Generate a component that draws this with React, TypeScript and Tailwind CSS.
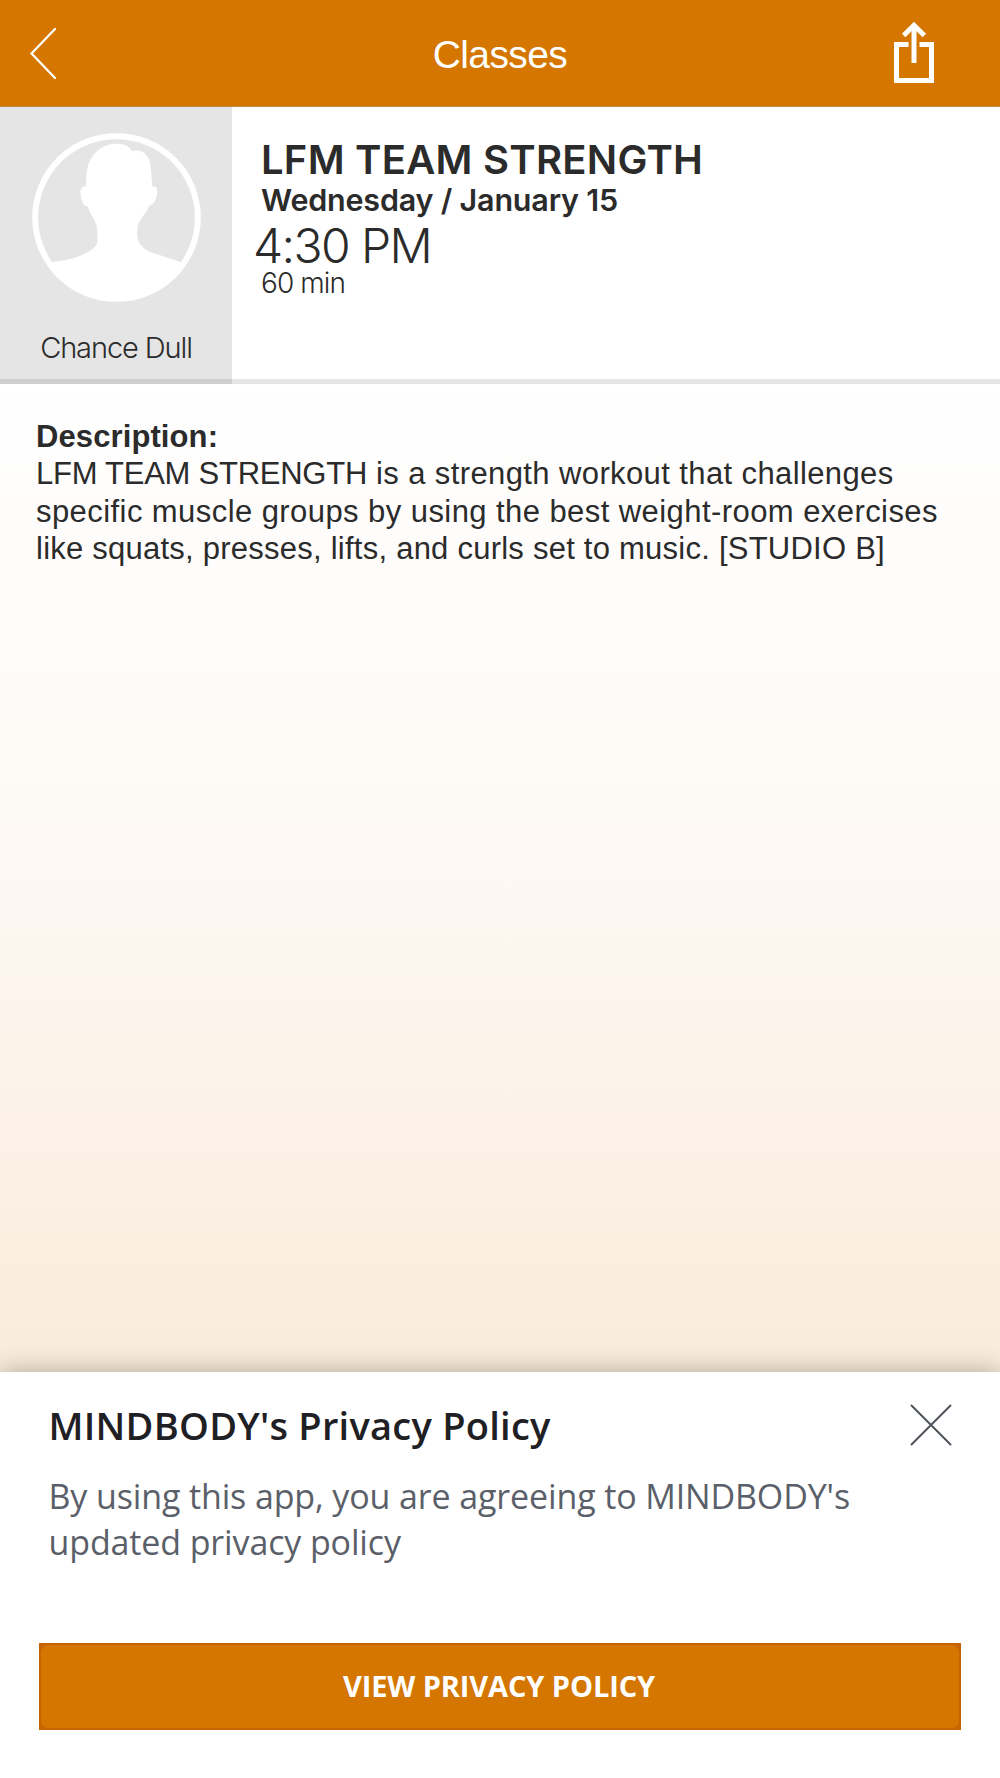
import type { ReactNode } from 'react';

const classInfo = {
  name: 'LFM TEAM STRENGTH',
  date: 'Wednesday / January 15',
  time: '4:30 PM',
  duration: '60 min',
  instructor: 'Chance Dull',
};

function BackIcon() {
  return (
    <svg width="30" height="56" viewBox="0 0 30 56" fill="none" stroke="#fff" strokeWidth="2.2" strokeLinecap="round">
      <path d="M27 4 3.5 28.5 27 53" />
    </svg>
  );
}

function ShareIcon() {
  return (
    <svg width="42" height="63" viewBox="0 0 42 63" fill="none" stroke="#fff" strokeWidth="5">
      <path d="M15.5 23.5H3.5V59.5H38.5V23.5H26.5" />
      <path d="M21 42V6" />
      <path d="M10.7 14.5 21 4.2 31.3 14.5" />
    </svg>
  );
}

function CloseIcon() {
  return (
    <svg width="44" height="44" viewBox="0 0 44 44" stroke="#50545d" strokeWidth="2" strokeLinecap="round">
      <path d="M2.5 2.5 41.5 41.5M41.5 2.5 2.5 41.5" />
    </svg>
  );
}

function Avatar() {
  return (
    <svg width="169" height="169" viewBox="95 98 507 508">
      <circle cx="348.5" cy="352" r="244.5" fill="none" stroke="#fff" strokeWidth="18" />
      <path
        fill="#fff"
        d="M151 486C196 482 234 473 262 456C281 445 291 435 291 421V392C291 366 272 349 262 318C248 320 240 293 240 275C240 264 247 258 257 259C257 228 259 203 267 185C282 150 313 130 347 130C372 130 388 137 395 153C426 142 450 165 452 205L456 259C467 257 472 264 471 277C469 299 459 316 448 315C437 342 411 362 411 390V405C412 429 428 448 459 459C489 469 516 477 545 487C505 555 435 603 348 603C262 603 192 555 151 486Z"
      />
    </svg>
  );
}

function Header({ children }: { children: ReactNode }) {
  return (
    <header className="flex h-[107px] items-center justify-between border-b border-[#b98a50] bg-[#d47600] pr-[65px] pl-7">
      <button className="w-[42px]" aria-label="Back">
        <BackIcon />
      </button>
      <h1 className="pt-[3px] pl-[37px] text-[39px] leading-none tracking-[-0.6px] text-white">{children}</h1>
      <button aria-label="Share" className="-mt-0.5">
        <ShareIcon />
      </button>
    </header>
  );
}

export default function App() {
  return (
    <main className="flex h-[1778px] w-[1000px] flex-col overflow-hidden bg-white font-['Liberation_Sans',Arial,sans-serif] text-[#2b2b2b]">
      <Header>Classes</Header>

      <section className="flex h-[277px]">
        <div className="flex w-[232px] flex-col items-center border-b-[5px] border-[#cfcfcf] bg-[#e5e5e5] pt-[26px]">
          <Avatar />
          <p className="mt-[29px] font-[Inter,sans-serif] text-[29px] leading-[34px] font-light tracking-[-1.1px] whitespace-nowrap">
            {classInfo.instructor}
          </p>
        </div>
        <div className="flex-1 border-b-[5px] border-[#e5e5e5] pt-[30px] pl-[29px] font-[Inter,sans-serif] whitespace-nowrap">
          <h2 className="text-[40px] leading-[46px] font-semibold tracking-[0.25px]">{classInfo.name}</h2>
          <p className="-mt-px text-[30.5px] leading-9 font-semibold tracking-[-0.2px]">{classInfo.date}</p>
          <p className="-ml-2 pt-px text-[48px] leading-[54px] font-light tracking-[-1.6px]">{classInfo.time}</p>
          <p className="-mt-px text-[28px] leading-[22px] font-light tracking-[-0.9px]">{classInfo.duration}</p>
        </div>
      </section>

      <section className="flex-1 bg-linear-to-b from-white via-[#fdf8f3] to-[#faebdb] pt-[34px] pr-9 pl-9 text-[31px] leading-[37.4px] whitespace-nowrap">
        <h3 className="font-bold tracking-[0.1px]">Description:</h3>
        <p className="tracking-[0.39px]">
          <span className="tracking-[-0.25px]">LFM TEAM STRENGTH</span> is a strength workout that challenges
        </p>
        <p className="tracking-[0.43px]">specific muscle groups by using the best weight-room exercises</p>
        <p className="tracking-[0.24px]">like squats, presses, lifts, and curls set to music. [STUDIO B]</p>
      </section>

      <aside className="flex h-[406px] flex-col bg-white px-[39px] pt-[29px] font-['Open_Sans',sans-serif] shadow-[0_0_24px_rgba(0,0,0,0.3)]">
        <div className="flex justify-between pr-[8px] pl-[9.5px]">
          <h2 className="text-[38px] leading-[48px] font-semibold tracking-[0.25px] text-[#1f2024]">
            MINDBODY's Privacy Policy
          </h2>
          <button aria-label="Close">
            <CloseIcon />
          </button>
        </div>
        <p className="mt-[25px] pl-[9.5px] text-[34px] leading-[45.8px] tracking-[-0.13px] whitespace-nowrap text-[#5a5f69]">
          By using this app, you are agreeing to MINDBODY's
          <br />
          updated privacy policy
        </p>
        <button className="mt-auto mb-[48px] h-[87px] bg-[#c46500] p-[2px] text-[29px] font-bold tracking-[-0.1px] text-white">
          <span className="flex h-full items-center justify-center rounded-[7px] bg-[#d47600] pr-[2px] pb-px">VIEW PRIVACY POLICY</span>
        </button>
      </aside>
    </main>
  );
}
